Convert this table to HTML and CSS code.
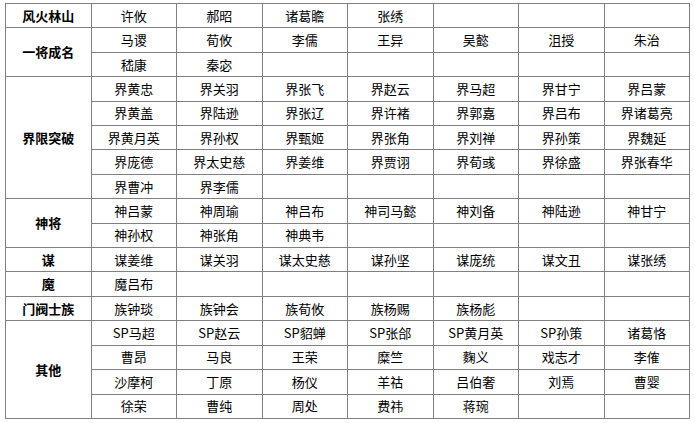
FILE: index.html
```html
<!DOCTYPE html>
<html lang="zh-CN">
<head>
<meta charset="utf-8">
<title>武将列表</title>
<link rel="stylesheet" href="styles.css">
</head>
<body>
<table class="grid">
  <colgroup>
    <col><col><col><col><col><col><col><col>
  </colgroup>
  <tbody>
    <tr><th>风火林山</th><td>许攸</td><td>郝昭</td><td>诸葛瞻</td><td>张绣</td><td></td><td></td><td></td></tr>
    <tr><th rowspan="2">一将成名</th><td>马谡</td><td>荀攸</td><td>李儒</td><td>王异</td><td>吴懿</td><td>沮授</td><td>朱治</td></tr>
    <tr><td>嵇康</td><td>秦宓</td><td></td><td></td><td></td><td></td><td></td></tr>
    <tr><th rowspan="5">界限突破</th><td>界黄忠</td><td>界关羽</td><td>界张飞</td><td>界赵云</td><td>界马超</td><td>界甘宁</td><td>界吕蒙</td></tr>
    <tr><td>界黄盖</td><td>界陆逊</td><td>界张辽</td><td>界许褚</td><td>界郭嘉</td><td>界吕布</td><td>界诸葛亮</td></tr>
    <tr><td>界黄月英</td><td>界孙权</td><td>界甄姬</td><td>界张角</td><td>界刘禅</td><td>界孙策</td><td>界魏延</td></tr>
    <tr><td>界庞德</td><td>界太史慈</td><td>界姜维</td><td>界贾诩</td><td>界荀彧</td><td>界徐盛</td><td>界张春华</td></tr>
    <tr><td>界曹冲</td><td>界李儒</td><td></td><td></td><td></td><td></td><td></td></tr>
    <tr><th rowspan="2">神将</th><td>神吕蒙</td><td>神周瑜</td><td>神吕布</td><td>神司马懿</td><td>神刘备</td><td>神陆逊</td><td>神甘宁</td></tr>
    <tr><td>神孙权</td><td>神张角</td><td>神典韦</td><td></td><td></td><td></td><td></td></tr>
    <tr><th>谋</th><td>谋姜维</td><td>谋关羽</td><td>谋太史慈</td><td>谋孙坚</td><td>谋庞统</td><td>谋文丑</td><td>谋张绣</td></tr>
    <tr><th>魔</th><td>魔吕布</td><td></td><td></td><td></td><td></td><td></td><td></td></tr>
    <tr><th>门阀士族</th><td>族钟琰</td><td>族钟会</td><td>族荀攸</td><td>族杨赐</td><td>族杨彪</td><td></td><td></td></tr>
    <tr><th rowspan="4">其他</th><td>SP马超</td><td>SP赵云</td><td>SP貂蝉</td><td>SP张郃</td><td>SP黄月英</td><td>SP孙策</td><td>诸葛恪</td></tr>
    <tr><td>曹昂</td><td>马良</td><td>王荣</td><td>糜竺</td><td>麴义</td><td>戏志才</td><td>李傕</td></tr>
    <tr><td>沙摩柯</td><td>丁原</td><td>杨仪</td><td>羊祜</td><td>吕伯奢</td><td>刘焉</td><td>曹婴</td></tr>
    <tr><td>徐荣</td><td>曹纯</td><td>周处</td><td>费祎</td><td>蒋琬</td><td></td><td></td></tr>
  </tbody>
</table>
</body>
</html>
```

FILE: styles.css
```css
html, body {
  margin: 0;
  padding: 0;
  background: #ffffff;
}

body {
  padding: 3px 0 0 5px;
  font-family: "Noto Sans CJK SC", "Noto Sans", sans-serif;
  font-size: 13px;
  color: #000000;
}

.grid {
  border-collapse: collapse;
  table-layout: fixed;
  width: 684px;
  height: 416px;
}

.grid col {
  width: 85.5px;
}

.grid th,
.grid td {
  border: 1px solid #808080;
  padding: 0;
  text-align: center;
  vertical-align: middle;
  line-height: 18px;
  white-space: nowrap;
}

.grid th {
  font-weight: bold;
}

.grid td {
  font-weight: normal;
}
```
